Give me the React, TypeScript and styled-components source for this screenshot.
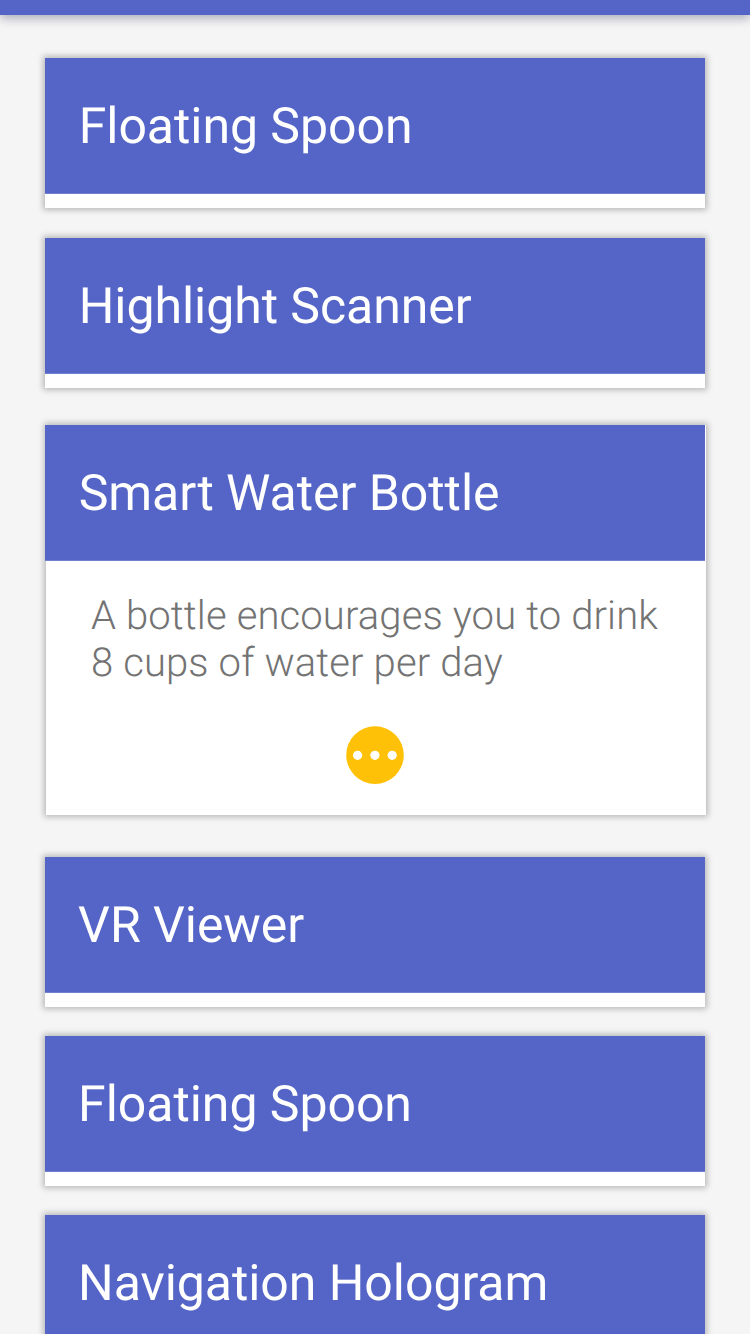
import React from "react";
import styled, { createGlobalStyle } from "styled-components";

const GlobalStyle = createGlobalStyle`
  * { box-sizing: border-box; }
  html, body { margin: 0; background: #f5f5f5; }
  body {
    height: 1334px;
    overflow: hidden;
    font-family: Roboto, sans-serif;
    text-rendering: geometricPrecision;
  }
`;

const Screen = styled.div`
  width: 750px;
  height: 1334px;
  overflow: hidden;
  background: #f5f5f5;
`;

const AppBar = styled.header`
  height: 15px;
  background: #5565c7;
  box-shadow: 0 4px 10px rgba(50, 50, 90, 0.34);
`;

const List = styled.main`
  display: flex;
  flex-direction: column;
  padding: 43px 45px 0;
`;

const Card = styled.section<{ $gap?: number; $expanded?: boolean }>`
  flex: none;
  height: ${(p) => (p.$expanded ? 390 : 150)}px;
  margin: 0 ${(p) => (p.$expanded ? "-1px" : "0")} ${(p) => p.$gap ?? 30}px
    ${(p) => (p.$expanded ? "1px" : "0")};
  background: #fff;
  box-shadow: 0 0 6px 2px rgba(0, 0, 0, 0.25);
`;

const CardTitle = styled.h2<{ $expanded?: boolean; $inset?: number }>`
  margin: 0 ${(p) => (p.$expanded ? "1px" : "0")} 0 ${(p) => (p.$expanded ? "-1px" : "0")};
  height: 136px;
  padding: 0 0 0 ${(p) => p.$inset ?? 33.7}px;
  border-bottom: 1px solid #7380d0;
  background: #5565c7;
  color: #fff;
  font-size: 50px;
  font-weight: 400;
  line-height: 138px;
  letter-spacing: -0.05px;
  white-space: nowrap;
`;

const CardBody = styled.div`
  display: flex;
  flex-direction: column;
  align-items: center;
  padding: 31px 2px 0 0;
`;

const Description = styled.p`
  align-self: flex-start;
  margin: 0 0 40px 45px;
  color: #737373;
  font-size: 40px;
  font-weight: 300;
  line-height: 47px;
  letter-spacing: 0.125px;
  white-space: nowrap;
`;

const MoreIcon = styled.svg`
  display: block;
  width: 58px;
  height: 58px;
`;

export default function App() {
  return (
    <Screen>
      <GlobalStyle />
      <AppBar />
      <List>
        <Card><CardTitle>Floating Spoon</CardTitle></Card>
        <Card $gap={37}><CardTitle>Highlight Scanner</CardTitle></Card>
        <Card $expanded $gap={42}>
          <CardTitle $expanded>Smart Water Bottle</CardTitle>
          <CardBody>
            <Description>
              A bottle encourages you to drink<br />8 cups of water per day
            </Description>
            <MoreIcon viewBox="0 0 58 58" role="img" aria-label="More">
              <circle cx="29" cy="29.1" r="28.8" fill="#ffc107" />
              <circle cx="11.6" cy="29.3" r="4.6" fill="#fff" />
              <circle cx="28.9" cy="29.3" r="4.6" fill="#fff" />
              <circle cx="46.2" cy="29.3" r="4.6" fill="#fff" />
            </MoreIcon>
          </CardBody>
        </Card>
        <Card $gap={29}><CardTitle $inset={33.1}>VR Viewer</CardTitle></Card>
        <Card $gap={29}><CardTitle $inset={33.1}>Floating Spoon</CardTitle></Card>
        <Card><CardTitle $inset={33.1}>Navigation Hologram</CardTitle></Card>
      </List>
    </Screen>
  );
}
